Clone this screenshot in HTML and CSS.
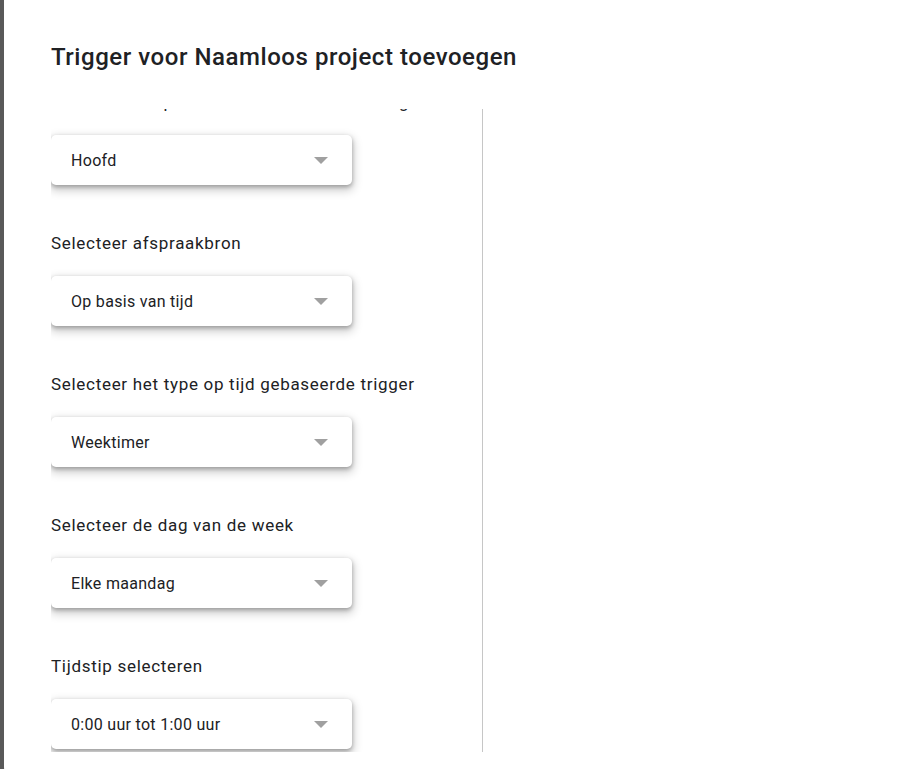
FILE: index.html
```html
<!DOCTYPE html>
<html lang="nl">
<head>
<meta charset="utf-8">
<title>Trigger toevoegen</title>
<link rel="stylesheet" href="styles.css">
</head>
<body>
<div class="dialog">
  <h1 class="title">Trigger voor Naamloos project toevoegen</h1>
  <div class="body">
    <div class="form">
      <div class="fields">
        <div class="field">
          <div class="label">Kies welke implementatie moet worden uitgevoerd</div>
          <div class="select"><span class="value">Hoofd</span><span class="arrow"></span></div>
        </div>
        <div class="field">
          <div class="label">Selecteer afspraakbron</div>
          <div class="select"><span class="value">Op basis van tijd</span><span class="arrow"></span></div>
        </div>
        <div class="field">
          <div class="label">Selecteer het type op tijd gebaseerde trigger</div>
          <div class="select"><span class="value">Weektimer</span><span class="arrow"></span></div>
        </div>
        <div class="field">
          <div class="label">Selecteer de dag van de week</div>
          <div class="select"><span class="value">Elke maandag</span><span class="arrow"></span></div>
        </div>
        <div class="field">
          <div class="label">Tijdstip selecteren</div>
          <div class="select"><span class="value">0:00 uur tot 1:00 uur</span><span class="arrow"></span></div>
        </div>
      </div>
    </div>
    <div class="side"></div>
  </div>
</div>
</body>
</html>
```

FILE: styles.css
```css
html, body {
  margin: 0;
  padding: 0;
  height: 100%;
}
body {
  background: #595959;
  overflow: hidden;
  font-family: Roboto, "Liberation Sans", Arial, sans-serif;
  color: #202124;
}
.dialog {
  margin-left: 4px;
  width: 940px;
  height: 779px;
  background: #ffffff;
  border-radius: 0 0 0 12px;
  box-sizing: border-box;
  padding: 42px 0 0 47px;
  display: flex;
  flex-direction: column;
}
.title {
  margin: 0;
  font-size: 24px;
  line-height: 30px;
  font-weight: 500;
  color: #202124;
  letter-spacing: 0.55px;
}
.body {
  margin-top: 37px;
  display: flex;
  height: 643px;
}
.form {
  width: 431px;
  height: 100%;
  overflow: hidden;
  border-right: 1px solid #c6c6c6;
}
.fields {
  margin-top: -19px;
  display: flex;
  flex-direction: column;
  gap: 46px;
}
.field {
  display: flex;
  flex-direction: column;
  gap: 21px;
}
.label {
  font-size: 17px;
  line-height: 24px;
  white-space: nowrap;
  color: #202124;
  letter-spacing: 0.7px;
}
.select {
  width: 301px;
  height: 50px;
  box-sizing: border-box;
  border-radius: 5px;
  background: #fff;
  box-shadow: 0 2px 4px rgba(0,0,0,0.28), 0 4px 10px 2px rgba(0,0,0,0.18);
  display: flex;
  align-items: center;
  justify-content: space-between;
  padding: 0 24px 0 20px;
}
.value {
  font-size: 16px;
  color: #202124;
  letter-spacing: 0.3px;
}
.arrow {
  width: 0;
  height: 0;
  border-left: 7px solid transparent;
  border-right: 7px solid transparent;
  border-top: 7px solid #a0a0a0;
  margin-top: 1px;
}
.side {
  flex: 1;
}
```
